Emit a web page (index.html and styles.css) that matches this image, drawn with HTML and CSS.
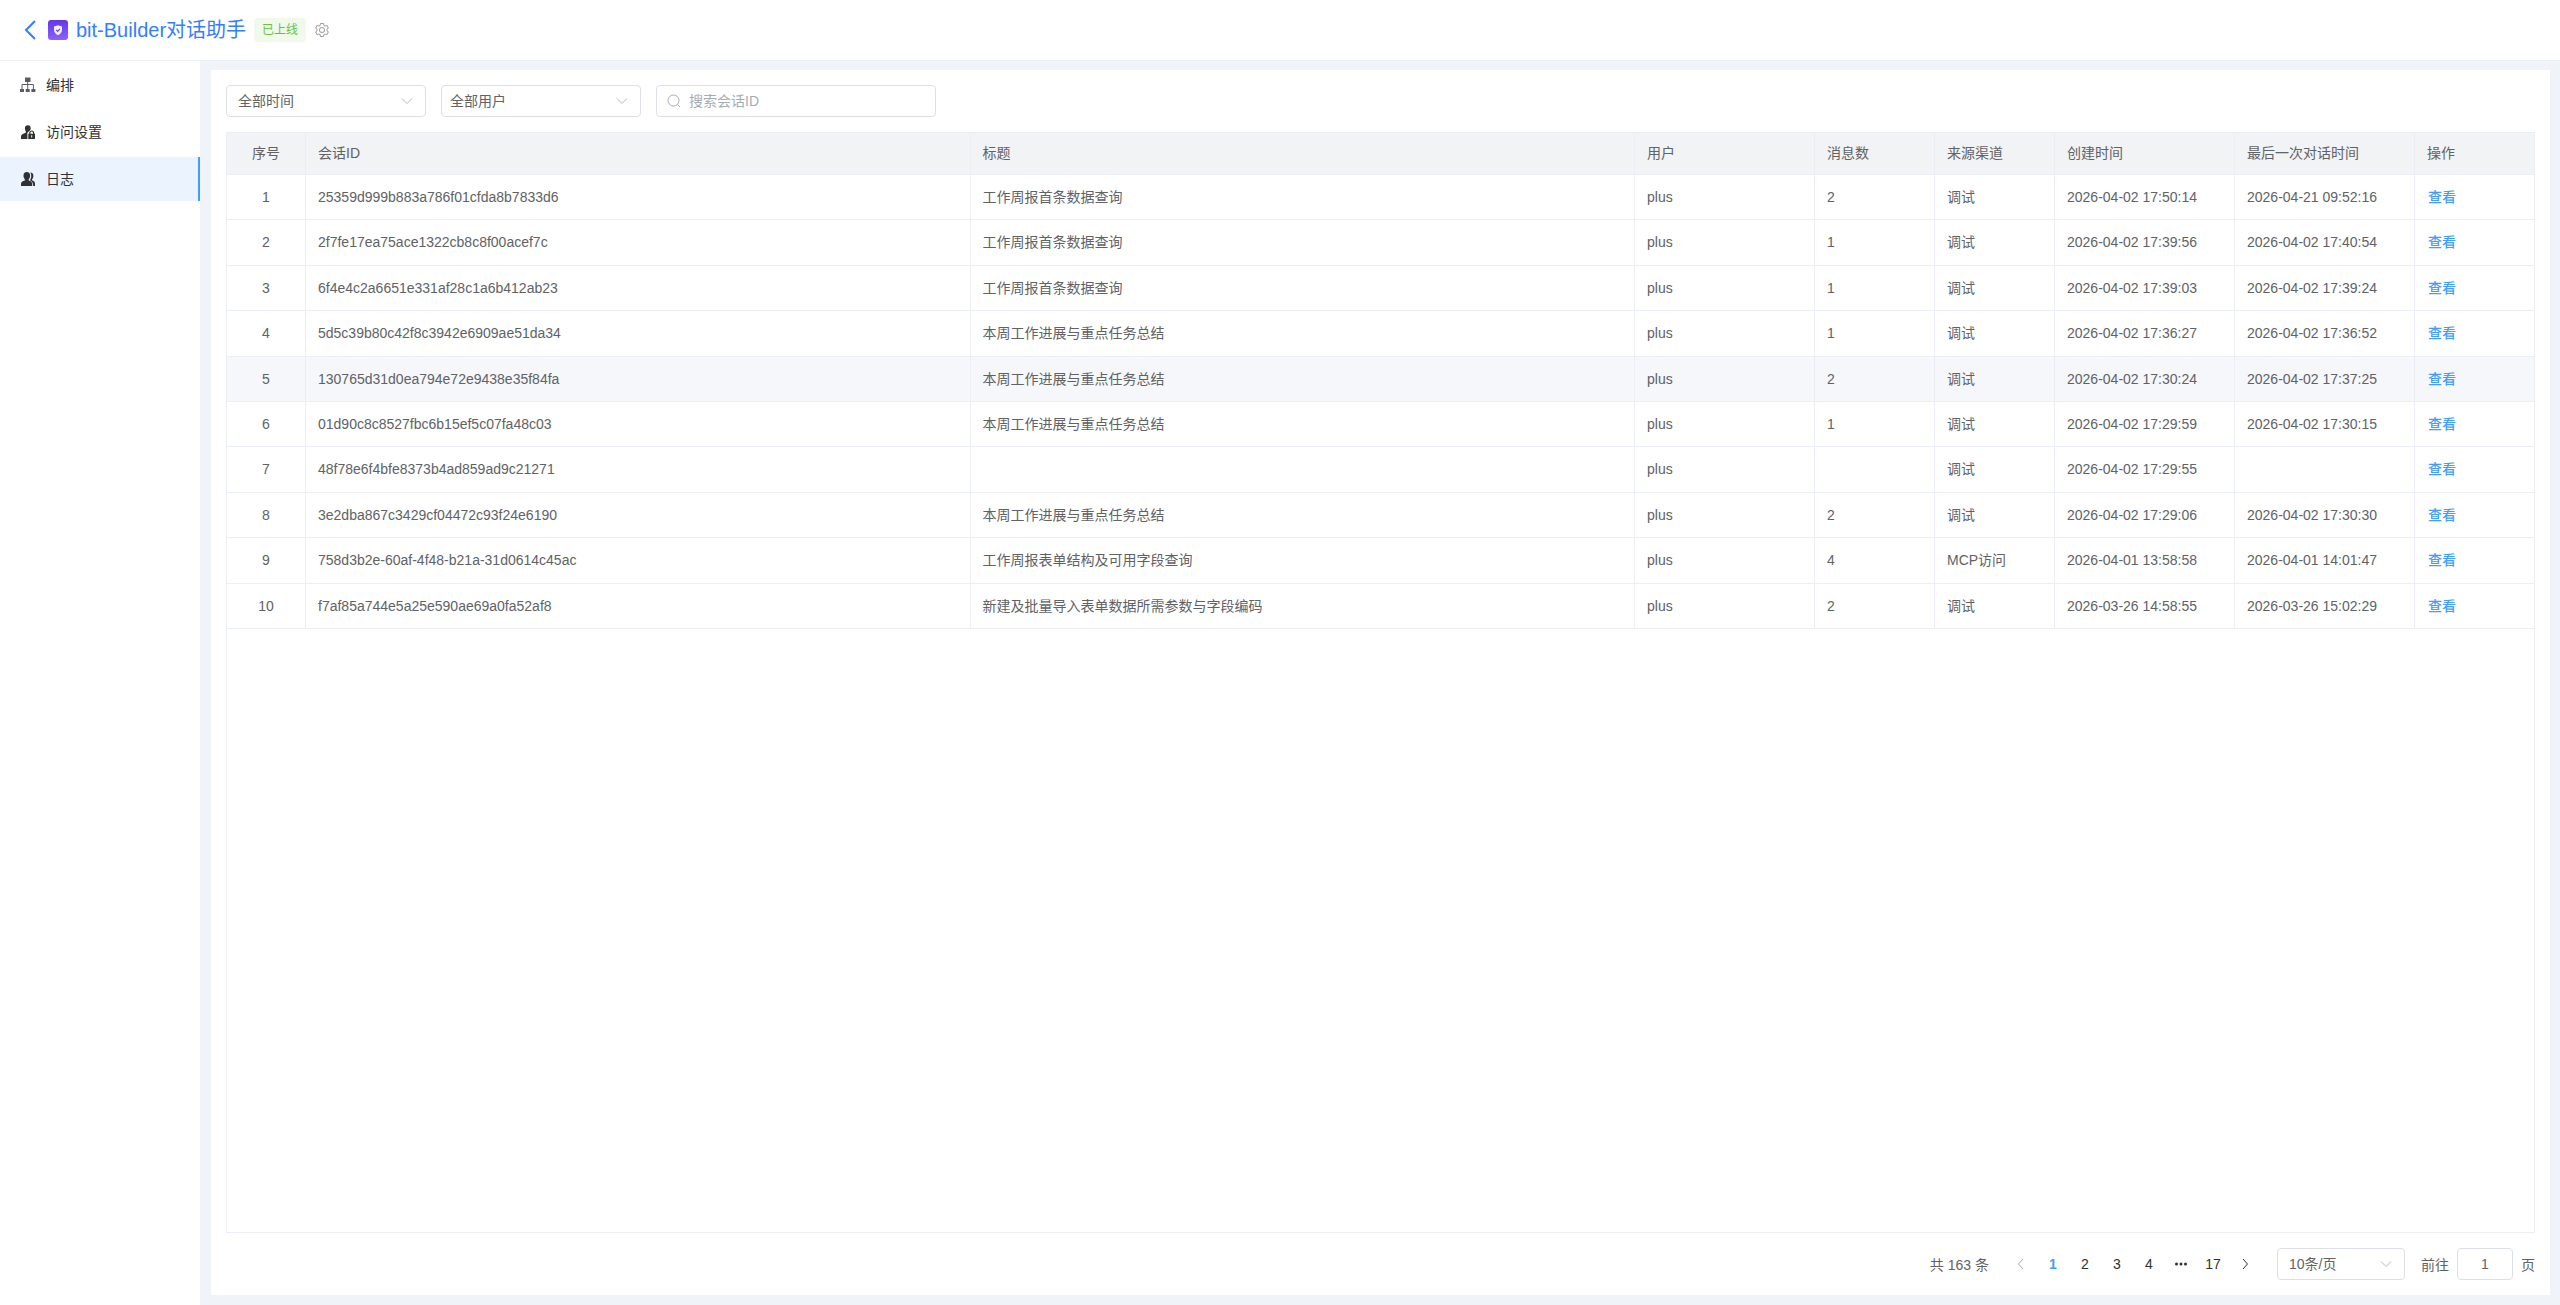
FILE: index.html
```html
<!DOCTYPE html>
<html lang="zh-CN">
<head>
    <meta charset="UTF-8">
    <meta name="viewport" content="width=device-width, initial-scale=1.0">
    <title>bit-Builder对话助手 - 日志</title>
    <link rel="stylesheet" href="styles.css">
</head>
<body>
    <header class="header">
        <button class="icon-btn back" aria-label="返回">
            <svg width="12" height="20" viewBox="0 0 12 20"><path d="M11 1 2 10l9 9" fill="none" stroke="currentColor" stroke-width="2"/></svg>
        </button>
        <svg class="logo" width="20" height="20" viewBox="0 0 20 20">
            <defs><linearGradient id="logoBg" x1="0" y1="0" x2="0" y2="1"><stop offset="0" stop-color="#6336e8"/><stop offset="1" stop-color="#8a63fb"/></linearGradient></defs>
            <rect width="20" height="20" rx="3" fill="url(#logoBg)"/>
            <path d="M10 5.2 14 6.6v3.2c0 2.600-1.600 4.200-4 5.400-2.400-1.200-4-2.800-4-5.400V6.600z" fill="#f3effe"/>
            <path d="m8.200 9.900 1.400 1.400 2.400-2.500" fill="none" stroke="#6a40ec" stroke-width="1.200"/>
        </svg>
        <h1 class="title">bit-Builder对话助手</h1>
        <span class="tag">已上线</span>
        <button class="icon-btn setting" aria-label="设置">
            <svg width="16" height="16" viewBox="0 0 1024 1024"><path fill="currentColor" d="M600.704 64a32 32 0 0 1 30.464 22.208l35.200 109.376c14.784 7.232 28.928 15.360 42.432 24.512l112.384-24.192a32 32 0 0 1 34.432 15.360L944.320 364.800a32 32 0 0 1-4.032 37.504l-77.120 85.120a357.120 357.120 0 0 1 0 49.024l77.120 85.248a32 32 0 0 1 4.032 37.504l-88.704 153.600a32 32 0 0 1-34.432 15.296L708.800 803.904c-13.440 9.088-27.648 17.280-42.368 24.512l-35.264 109.376A32 32 0 0 1 600.704 960H423.296a32 32 0 0 1-30.464-22.208L357.696 828.480a351.616 351.616 0 0 1-42.560-24.640l-112.320 24.256a32 32 0 0 1-34.432-15.360L79.680 659.200a32 32 0 0 1 4.032-37.504l77.120-85.248a357.120 357.120 0 0 1 0-48.896l-77.120-85.248A32 32 0 0 1 79.680 364.800l88.704-153.600a32 32 0 0 1 34.432-15.296l112.320 24.256c13.568-9.152 27.776-17.408 42.560-24.640l35.200-109.312A32 32 0 0 1 423.232 64H600.640zm-23.424 64H446.720l-36.352 113.088-24.512 11.968a294.113 294.113 0 0 0-34.816 20.096l-22.656 15.360-116.224-25.088-65.280 113.152 79.680 88.192-1.920 27.136a293.120 293.120 0 0 0 0 40.192l1.920 27.136-79.808 88.192 65.344 113.152 116.224-25.024 22.656 15.296a294.113 294.113 0 0 0 34.816 20.096l24.512 11.968L446.720 896h130.688l36.480-113.152 24.448-11.904a288.282 288.282 0 0 0 34.752-20.096l22.592-15.296 116.288 25.024 65.280-113.152-79.744-88.192 1.920-27.136a293.120 293.120 0 0 0 0-40.256l-1.920-27.136 79.808-88.128-65.344-113.152-116.288 24.960-22.592-15.232a287.616 287.616 0 0 0-34.752-20.096l-24.448-11.904L577.344 128zM512 320a192 192 0 1 1 0 384 192 192 0 0 1 0-384zm0 64a128 128 0 1 0 0 256 128 128 0 0 0 0-256z"/></svg>
        </button>
    </header>

    <div class="layout">
        <nav class="sidebar">
            <a href="#" class="menu-item">
                <svg width="16" height="16" viewBox="0 0 16 16"><path fill="#5b5c62" d="M5 .5h5.500V5H5zM0 12h4v3H0zM5.700 12h4v3h-4zM11.400 12h4v3h-4z"/><path d="M7.700 5v7M2 12V7.500h11.400V12" fill="none" stroke="#5b5c62"/></svg>
                <span>编排</span>
            </a>
            <a href="#" class="menu-item">
                <svg width="16" height="16" viewBox="0 0 16 16"><path fill="currentColor" d="M7.800 1.300a2.900 2.900 0 0 1 2.900 2.900c0 1.200-.6 2.200-1.400 2.800L7.400 8.800V15H1v-2.600c0-1.800 1.500-2.400 3.600-3.200 1.300-.5 1.600-1 1.200-2C5.200 6.400 4.900 5.400 4.900 4.200a2.900 2.900 0 0 1 2.900-2.900z"/><path d="M9.800 10V8.900a1.900 1.900 0 0 1 3.800 0V10" fill="none" stroke="currentColor" stroke-width="1.200"/><path fill="currentColor" fill-rule="evenodd" d="M8.300 9.800H15V15H8.300zM11.200 11.300v2.200h1v-2.200z"/></svg>
                <span>访问设置</span>
            </a>
            <a href="#" class="menu-item active">
                <svg width="16" height="16" viewBox="0 0 16 16"><path fill="currentColor" d="M6.800 1c2.200 0 3.300 1.400 3.300 3.600 0 1.600-.5 2.900-1.400 3.800v1c2.300.8 3.500 1.500 3.500 3.300V15H1v-2.300c0-1.800 1.400-2.500 3.900-3.300v-1C4 7.500 3.500 6.200 3.500 4.600 3.500 2.400 4.600 1 6.800 1z"/><path fill="currentColor" d="M10.400 1.500c2 0 3 1.300 3 3.300 0 1.500-.5 2.700-1.300 3.500v.9c1.900.8 2.900 1.700 2.900 3.400V15h-1.800c0-2.800-.7-4.300-2.900-5.300V8.600c1.100-1.700 1.400-5 .1-7.100z"/></svg>
                <span>日志</span>
            </a>
        </nav>

        <main class="content">
            <section class="panel">
                <form class="filters">
                    <select class="select" aria-label="时间">
                        <option>全部时间</option>
                    </select>
                    <select class="select user-select" aria-label="用户">
                        <option>全部用户</option>
                    </select>
                    <label class="search">
                        <svg width="14" height="14" viewBox="0 0 14 14"><circle cx="6.500" cy="6.500" r="5.500"/><path d="m10.500 10.500 2.500 2.500"/></svg>
                        <input type="text" placeholder="搜索会话ID" aria-label="搜索会话ID">
                    </label>
                </form>

                <div class="table-wrap">
                    <table class="table">
                        <colgroup>
                            <col class="col-index"><col><col><col class="col-lg"><col class="col-sm"><col class="col-sm"><col class="col-lg"><col class="col-lg"><col class="col-action">
                        </colgroup>
                        <thead>
                            <tr><th>序号</th><th>会话ID</th><th>标题</th><th>用户</th><th>消息数</th><th>来源渠道</th><th>创建时间</th><th>最后一次对话时间</th><th>操作</th></tr>
                        </thead>
                        <tbody>
                            <tr><td>1</td><td>25359d999b883a786f01cfda8b7833d6</td><td>工作周报首条数据查询</td><td>plus</td><td>2</td><td>调试</td><td>2026-04-02 17:50:14</td><td>2026-04-21 09:52:16</td><td><a href="#">查看</a></td></tr>
                            <tr><td>2</td><td>2f7fe17ea75ace1322cb8c8f00acef7c</td><td>工作周报首条数据查询</td><td>plus</td><td>1</td><td>调试</td><td>2026-04-02 17:39:56</td><td>2026-04-02 17:40:54</td><td><a href="#">查看</a></td></tr>
                            <tr><td>3</td><td>6f4e4c2a6651e331af28c1a6b412ab23</td><td>工作周报首条数据查询</td><td>plus</td><td>1</td><td>调试</td><td>2026-04-02 17:39:03</td><td>2026-04-02 17:39:24</td><td><a href="#">查看</a></td></tr>
                            <tr><td>4</td><td>5d5c39b80c42f8c3942e6909ae51da34</td><td>本周工作进展与重点任务总结</td><td>plus</td><td>1</td><td>调试</td><td>2026-04-02 17:36:27</td><td>2026-04-02 17:36:52</td><td><a href="#">查看</a></td></tr>
                            <tr class="hover"><td>5</td><td>130765d31d0ea794e72e9438e35f84fa</td><td>本周工作进展与重点任务总结</td><td>plus</td><td>2</td><td>调试</td><td>2026-04-02 17:30:24</td><td>2026-04-02 17:37:25</td><td><a href="#">查看</a></td></tr>
                            <tr><td>6</td><td>01d90c8c8527fbc6b15ef5c07fa48c03</td><td>本周工作进展与重点任务总结</td><td>plus</td><td>1</td><td>调试</td><td>2026-04-02 17:29:59</td><td>2026-04-02 17:30:15</td><td><a href="#">查看</a></td></tr>
                            <tr><td>7</td><td>48f78e6f4bfe8373b4ad859ad9c21271</td><td></td><td>plus</td><td></td><td>调试</td><td>2026-04-02 17:29:55</td><td></td><td><a href="#">查看</a></td></tr>
                            <tr><td>8</td><td>3e2dba867c3429cf04472c93f24e6190</td><td>本周工作进展与重点任务总结</td><td>plus</td><td>2</td><td>调试</td><td>2026-04-02 17:29:06</td><td>2026-04-02 17:30:30</td><td><a href="#">查看</a></td></tr>
                            <tr><td>9</td><td>758d3b2e-60af-4f48-b21a-31d0614c45ac</td><td>工作周报表单结构及可用字段查询</td><td>plus</td><td>4</td><td>MCP访问</td><td>2026-04-01 13:58:58</td><td>2026-04-01 14:01:47</td><td><a href="#">查看</a></td></tr>
                            <tr><td>10</td><td>f7af85a744e5a25e590ae69a0fa52af8</td><td>新建及批量导入表单数据所需参数与字段编码</td><td>plus</td><td>2</td><td>调试</td><td>2026-03-26 14:58:55</td><td>2026-03-26 15:02:29</td><td><a href="#">查看</a></td></tr>
                        </tbody>
                    </table>
                </div>

                <div class="pagination">
                    <span>共 163 条</span>
                    <div class="pager">
                        <button disabled aria-label="上一页"><svg width="12" height="12" viewBox="0 0 12 12"><path d="M8 1 3.500 6 8 11"/></svg></button>
                        <button class="current">1</button>
                        <button>2</button>
                        <button>3</button>
                        <button>4</button>
                        <button aria-label="更多"><svg class="dots" width="14" height="14" viewBox="0 0 14 14"><circle cx="2.500" cy="7" r="1.500"/><circle cx="7" cy="7" r="1.500"/><circle cx="11.500" cy="7" r="1.500"/></svg></button>
                        <button>17</button>
                        <button aria-label="下一页"><svg width="12" height="12" viewBox="0 0 12 12"><path d="M4 1 8.500 6 4 11"/></svg></button>
                    </div>
                    <select class="select page-size" aria-label="每页条数">
                        <option>10条/页</option>
                    </select>
                    <label class="jump">前往 <input type="text" value="1"> 页</label>
                </div>
            </section>
        </main>
    </div>
</body>
</html>
```
FILE: styles.css
```css
* {
  box-sizing: border-box;
}
body {
  margin: 0;
  height: 100vh;
  display: flex;
  flex-direction: column;
  font-family: "Liberation Sans", Arial, "Noto Sans CJK SC", sans-serif;
  font-size: 14px;
  color: #606266;
  background: #fff;
}
button, input, select {
  font: inherit;
  color: inherit;
}
button {
  cursor: pointer;
}
a {
  text-decoration: none;
}

/* header */
.header {
  display: flex;
  align-items: center;
  height: 61px;
  padding: 0 24px;
  border-bottom: 1px solid #ebeef2;
}
.icon-btn {
  display: flex;
  padding: 0;
  border: none;
  background: none;
}
.back {
  color: #2f7eff;
}
.logo {
  margin: 0 8px 0 12px;
}
.title {
  margin: 0 8px 0 0;
  font-size: 20px;
  font-weight: 400;
  line-height: 28px;
  color: #337dff;
}
.tag {
  height: 24px;
  padding: 0 8px;
  margin-right: 8px;
  border-radius: 4px;
  background: #f0f9eb;
  color: #67c23a;
  font-size: 12px;
  line-height: 24px;
}
.setting {
  color: #a0a0a0;
}

.layout {
  flex: 1;
  display: flex;
  min-height: 0;
}

/* sidebar */
.sidebar {
  width: 200px;
  padding-top: 2px;
  display: flex;
  flex-direction: column;
  gap: 3px;
}
.menu-item {
  display: flex;
  align-items: center;
  gap: 10px;
  height: 44px;
  padding-left: 20px;
  line-height: 20px;
  color: #303133;
}
.menu-item.active {
  background: #ebf3ff;
  border-right: 2px solid #409eff;
}

/* content */
.content {
  flex: 1;
  min-width: 0;
  display: flex;
  padding: 9px 10px 10px 11px;
  background: #f0f4f9;
}
.panel {
  flex: 1;
  min-width: 0;
  display: flex;
  flex-direction: column;
  gap: 15px;
  padding: 15px;
  background: #fff;
}
.filters {
  display: flex;
  gap: 15px;
}
.select {
  width: 200px;
  height: 32px;
  padding: 0 11px;
  border: 1px solid #dcdfe6;
  border-radius: 4px;
  appearance: none;
  background: #fff url("data:image/svg+xml,%3Csvg xmlns='http://www.w3.org/2000/svg' width='12' height='12' viewBox='0 0 12 12'%3E%3Cpath d='M1 3.500l5 5 5-5' fill='none' stroke='%23b4b8bf'/%3E%3C/svg%3E") no-repeat right 12px center;
}
.user-select {
  padding: 0 8px;
}
.search {
  display: flex;
  align-items: center;
  gap: 8px;
  width: 280px;
  height: 32px;
  padding: 0 10px;
  border: 1px solid #dcdfe6;
  border-radius: 4px;
}
.search svg {
  fill: none;
  stroke: #a8abb2;
}
.search input {
  flex: 1;
  min-width: 0;
  padding: 0;
  border: none;
  outline: none;
  background: none;
}
.search input::placeholder {
  color: #a8abb2;
}

/* table */
.table-wrap {
  flex: 1;
  min-height: 0;
  overflow: auto;
  border: 1px solid #ebeef5;
}
.table {
  width: 100%;
  table-layout: fixed;
  border-collapse: separate;
  border-spacing: 0;
  line-height: 1.6;
}
.col-index {
  width: 79px;
}
.col-lg {
  width: 180px;
}
.col-sm {
  width: 120px;
}
.col-action {
  width: 119px;
}
.table th,
.table td {
  padding: 11px 12px;
  border-right: 1px solid #ebeef5;
  border-bottom: 1px solid #ebeef5;
  text-align: left;
  font-weight: 400;
}
.table th {
  height: 42px;
  padding: 0 12px;
  background: #f1f3f5;
}
.table th:first-child,
.table td:first-child {
  text-align: center;
}
.table th:last-child,
.table td:last-child {
  border-right: none;
}
.table .hover td {
  background: #f5f7fa;
}
.table a {
  padding-left: 1px;
  color: #409eff;
  font-weight: 500;
}

/* pagination */
.pagination {
  display: flex;
  justify-content: flex-end;
  align-items: center;
  gap: 16px;
}
.pager {
  display: flex;
}
.pager button {
  display: flex;
  align-items: center;
  justify-content: center;
  width: 32px;
  height: 32px;
  padding: 0;
  border: none;
  background: none;
  color: #303133;
}
.pager svg {
  fill: none;
  stroke: currentColor;
}
.pager .dots {
  fill: currentColor;
  stroke: none;
}
.pager button:disabled {
  color: #a8abb2;
}
.pager .current {
  color: #409eff;
  font-weight: 700;
}
.page-size {
  width: 128px;
}
.jump {
  display: flex;
  align-items: center;
  gap: 8px;
}
.jump input {
  width: 56px;
  height: 32px;
  border: 1px solid #dcdfe6;
  border-radius: 4px;
  text-align: center;
}
```
